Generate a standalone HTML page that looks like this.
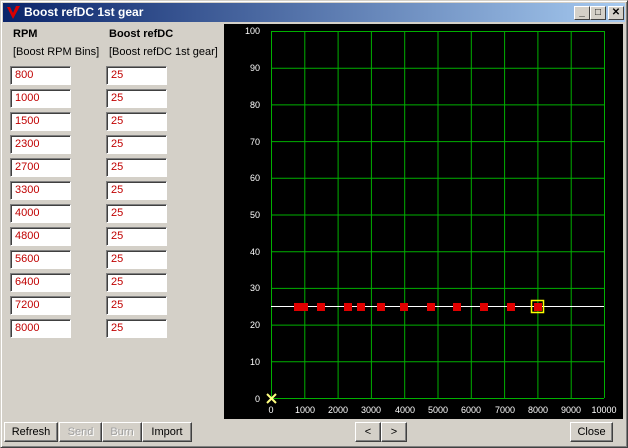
<html><head><style>
body{margin:0;width:628px;height:448px;overflow:hidden;background:#d4d0c8;font-family:"Liberation Sans",sans-serif;font-size:11px;position:relative}
.win{position:absolute;left:0;top:0;width:626px;height:446px;border:1px solid;border-color:#d4d0c8 #404040 #404040 #d4d0c8;box-shadow:inset 1px 1px #fff,inset -1px -1px #808080}
.title{position:absolute;left:3px;top:3px;width:622px;height:19px;background:linear-gradient(to right,#0a246a,#a6caf0);color:#fff;font-weight:bold;font-size:12px}
.title span{position:absolute;left:21px;top:2px}
.tb{position:absolute;top:3px;width:14px;height:12px;background:#d4d0c8;border:1px solid;border-color:#fff #404040 #404040 #fff;font-size:10px;line-height:12px;text-align:center;color:#000}
.lbl{position:absolute;color:#000}
.inp{position:absolute;width:55px;height:17px;background:#fff;border:1px solid;border-color:#808080 #fff #fff #808080;box-shadow:inset 1px 1px #404040;color:#c00000;font-size:11px;line-height:17px;padding-left:4px;box-sizing:content-box}
.btn{position:absolute;top:422px;height:18px;border:1px solid;border-color:#fff #404040 #404040 #fff;box-shadow:inset -1px -1px #808080;text-align:center;line-height:18px;font-size:11px;color:#000}
.dis{color:#a0a0a0;text-shadow:1px 1px #fff}
</style></head><body>
<div class="win"></div>
<div class="title">
<svg style="position:absolute;left:3px;top:2px" width="15" height="15"><path d="M1 2 L7 14 L14 1 L10 1 L7 8 L4 2Z" fill="#d00"/></svg>
<span>Boost refDC 1st gear</span>
<div class="tb" style="left:571px">_</div><div class="tb" style="left:587px">□</div><div class="tb" style="left:605px;font-weight:bold">✕</div>
</div>
<div class="lbl" style="left:13px;top:28px;font-weight:bold">RPM</div>
<div class="lbl" style="left:109px;top:28px;font-weight:bold">Boost refDC</div>
<div class="lbl" style="left:13px;top:46px">[Boost RPM Bins]</div>
<div class="lbl" style="left:109px;top:46px">[Boost refDC 1st gear]</div>
<div class="inp" style="left:10px;top:66px">800</div><div class="inp" style="left:106px;top:66px">25</div>
<div class="inp" style="left:10px;top:89px">1000</div><div class="inp" style="left:106px;top:89px">25</div>
<div class="inp" style="left:10px;top:112px">1500</div><div class="inp" style="left:106px;top:112px">25</div>
<div class="inp" style="left:10px;top:135px">2300</div><div class="inp" style="left:106px;top:135px">25</div>
<div class="inp" style="left:10px;top:158px">2700</div><div class="inp" style="left:106px;top:158px">25</div>
<div class="inp" style="left:10px;top:181px">3300</div><div class="inp" style="left:106px;top:181px">25</div>
<div class="inp" style="left:10px;top:204px">4000</div><div class="inp" style="left:106px;top:204px">25</div>
<div class="inp" style="left:10px;top:227px">4800</div><div class="inp" style="left:106px;top:227px">25</div>
<div class="inp" style="left:10px;top:250px">5600</div><div class="inp" style="left:106px;top:250px">25</div>
<div class="inp" style="left:10px;top:273px">6400</div><div class="inp" style="left:106px;top:273px">25</div>
<div class="inp" style="left:10px;top:296px">7200</div><div class="inp" style="left:106px;top:296px">25</div>
<div class="inp" style="left:10px;top:319px">8000</div><div class="inp" style="left:106px;top:319px">25</div>
<svg style="position:absolute;left:224px;top:24px" width="399" height="395" font-family="Liberation Sans" font-size="9" fill="#fff">
<rect width="399" height="395" fill="#000"/>
<g stroke="#00b000" stroke-width="1">
<line x1="47.5" y1="7" x2="47.5" y2="374"/><line x1="80.8" y1="7" x2="80.8" y2="374"/><line x1="114.1" y1="7" x2="114.1" y2="374"/><line x1="147.4" y1="7" x2="147.4" y2="374"/><line x1="180.7" y1="7" x2="180.7" y2="374"/><line x1="214" y1="7" x2="214" y2="374"/><line x1="247.3" y1="7" x2="247.3" y2="374"/><line x1="280.6" y1="7" x2="280.6" y2="374"/><line x1="313.9" y1="7" x2="313.9" y2="374"/><line x1="347.2" y1="7" x2="347.2" y2="374"/><line x1="380.5" y1="7" x2="380.5" y2="374"/>
<line x1="47" y1="7.5" x2="380" y2="7.5"/><line x1="47" y1="44.2" x2="380" y2="44.2"/><line x1="47" y1="80.9" x2="380" y2="80.9"/><line x1="47" y1="117.6" x2="380" y2="117.6"/><line x1="47" y1="154.3" x2="380" y2="154.3"/><line x1="47" y1="191" x2="380" y2="191"/><line x1="47" y1="227.7" x2="380" y2="227.7"/><line x1="47" y1="264.4" x2="380" y2="264.4"/><line x1="47" y1="301.1" x2="380" y2="301.1"/><line x1="47" y1="337.8" x2="380" y2="337.8"/><line x1="47" y1="374.5" x2="380" y2="374.5"/>
</g>
<g text-anchor="end"><text x="36" y="10">100</text><text x="36" y="47">90</text><text x="36" y="84">80</text><text x="36" y="121">70</text><text x="36" y="157">60</text><text x="36" y="194">50</text><text x="36" y="231">40</text><text x="36" y="267">30</text><text x="36" y="304">20</text><text x="36" y="341">10</text><text x="36" y="378">0</text></g>
<g text-anchor="middle"><text x="47" y="389">0</text><text x="81" y="389">1000</text><text x="114" y="389">2000</text><text x="147" y="389">3000</text><text x="181" y="389">4000</text><text x="214" y="389">5000</text><text x="247" y="389">6000</text><text x="281" y="389">7000</text><text x="314" y="389">8000</text><text x="347" y="389">9000</text><text x="380" y="389">10000</text></g>
<line x1="47" y1="282.5" x2="380" y2="282.5" stroke="#fff"/>
<g fill="#e00000"><rect x="70" y="279" width="8" height="8"/><rect x="76" y="279" width="8" height="8"/><rect x="93" y="279" width="8" height="8"/><rect x="120" y="279" width="8" height="8"/><rect x="133" y="279" width="8" height="8"/><rect x="153" y="279" width="8" height="8"/><rect x="176" y="279" width="8" height="8"/><rect x="203" y="279" width="8" height="8"/><rect x="229" y="279" width="8" height="8"/><rect x="256" y="279" width="8" height="8"/><rect x="283" y="279" width="8" height="8"/><rect x="310" y="279" width="8" height="8"/></g>
<rect x="307.5" y="276.5" width="12" height="12" fill="none" stroke="#ff0" stroke-width="1.5"/>
<path d="M43 370 L52 379 M52 370 L43 379" stroke="#ffff80" stroke-width="2"/>
</svg>
<div class="btn" style="left:4px;width:52px">Refresh</div>
<div class="btn dis" style="left:59px;width:41px">Send</div>
<div class="btn dis" style="left:102px;width:38px">Burn</div>
<div class="btn" style="left:142px;width:48px">Import</div>
<div class="btn" style="left:355px;width:24px">&lt;</div>
<div class="btn" style="left:381px;width:24px">&gt;</div>
<div class="btn" style="left:570px;width:41px">Close</div>
</body></html>
